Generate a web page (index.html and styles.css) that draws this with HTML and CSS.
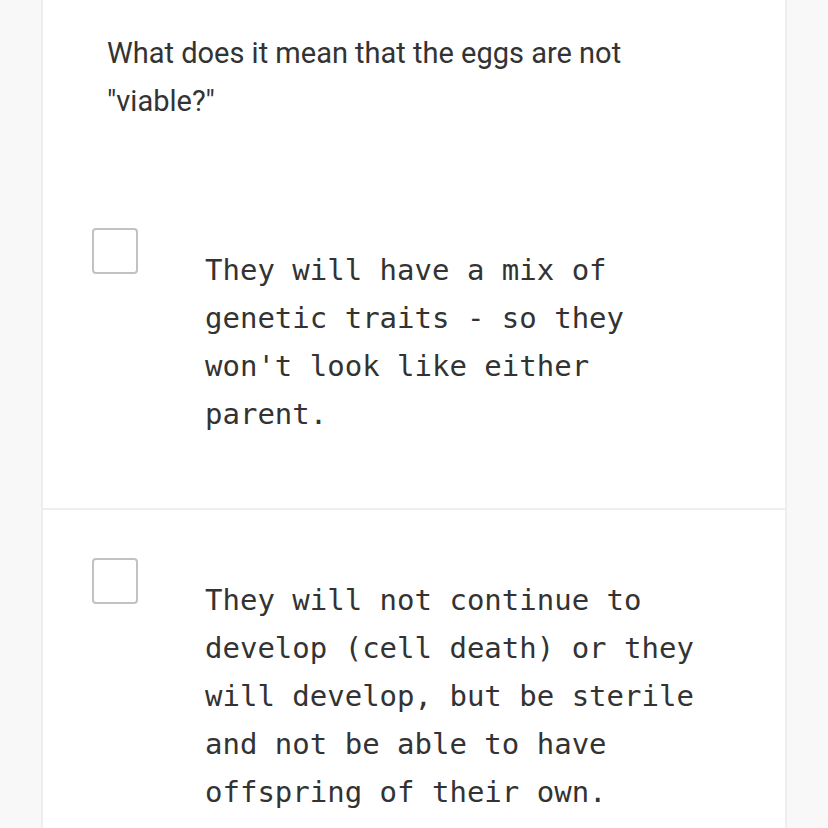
FILE: index.html
```html
<!DOCTYPE html>
<html>
<head>
<meta charset="utf-8">
<link rel="stylesheet" href="styles.css">
</head>
<body>
<div class="card">
  <div class="question">What does it mean that the eggs are not "viable?"</div>
  <div class="option">
    <div class="checkbox"></div>
    <div class="answer">They will have a mix of genetic traits - so they won't look like either parent.</div>
  </div>
  <div class="option">
    <div class="checkbox"></div>
    <div class="answer">They will not continue to develop (cell death) or they will develop, but be sterile and not be able to have offspring of their own.</div>
  </div>
</div>
</body>
</html>
```
FILE: styles.css
```css
html, body {
  margin: 0;
  padding: 0;
  background: #f8f8f8;
  height: 828px;
  overflow: hidden;
}
.card {
  margin-left: 41px;
  width: 746px;
  box-sizing: border-box;
  min-height: 828px;
  background: #ffffff;
  border-left: 2px solid #eeeeee;
  border-right: 2px solid #eeeeee;
}
.question {
  font-family: Roboto, "Noto Sans", sans-serif;
  font-size: 29px;
  line-height: 48px;
  color: #333333;
  padding: 29px 0 55px 64px;
  max-width: 560px;
}
.option {
  display: flex;
  align-items: flex-start;
  padding: 48px 0 70px 49px;
  border-bottom: 2px solid #eeeeee;
}
.checkbox {
  flex: none;
  width: 46px;
  height: 46px;
  box-sizing: border-box;
  border: 2px solid #c2c2c2;
  border-radius: 4px;
  background: #ffffff;
}
.answer {
  margin: 18px 0 0 67px;
  width: 495px;
  font-family: "DejaVu Sans Mono", "Liberation Mono", monospace;
  font-size: 29px;
  line-height: 48px;
  color: #333333;
}
```
